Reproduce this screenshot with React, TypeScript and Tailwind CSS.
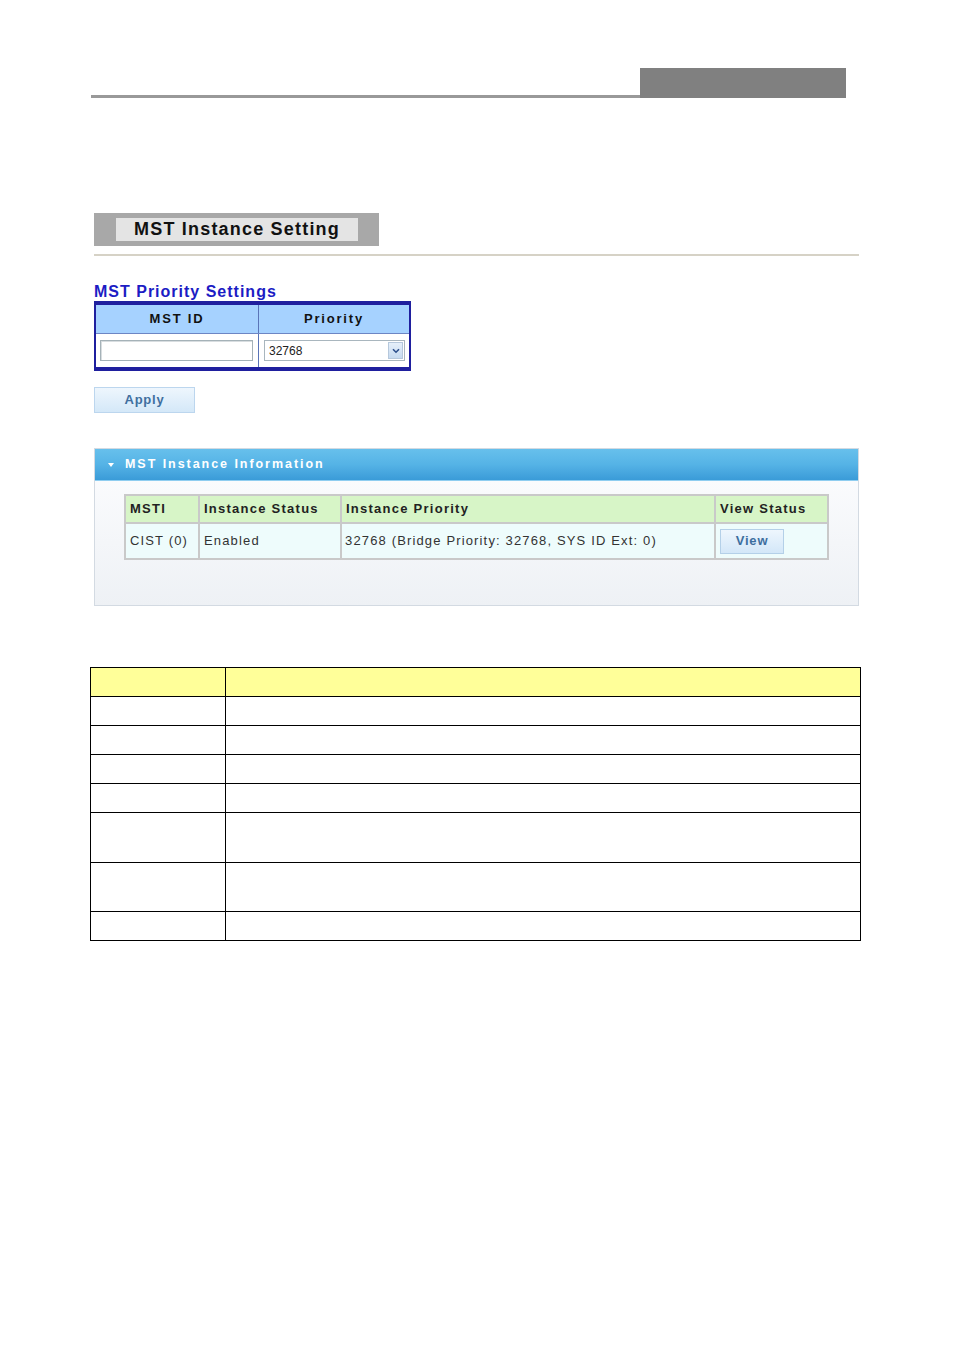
import React from "react";

const sans = { fontFamily: '"Liberation Sans", Arial, sans-serif' };

function PriorityTable() {
  return (
    <div className="w-[317px] border-x-2 border-t-4 border-b-4 border-[#1f1f9e] bg-white">
      <div className="grid grid-cols-[163px_1fr] bg-[#a6d2ff] border-b border-[#6d86c4]">
        <div className="h-[28px] flex items-center justify-center border-r border-[#5a74b8] text-[13px] font-bold tracking-[1.8px] text-[#111]">
          MST ID
        </div>
        <div className="h-[28px] flex items-center justify-center text-[13px] font-bold tracking-[1.8px] text-[#111]">
          Priority
        </div>
      </div>
      <div className="grid grid-cols-[163px_1fr]">
        <div className="h-[33px] flex items-center pl-[4px] border-r border-[#5a74b8]">
          <div className="w-[153px] h-[21px] border border-[#a5b2b8] bg-white shadow-[inset_1px_1px_0_#d8dde0]" />
        </div>
        <div className="h-[33px] flex items-center pl-[5px]">
          <div className="w-[141px] h-[21px] border border-[#a9b6be] bg-white flex items-center justify-between pl-[4px] pr-[1px]">
            <span className="text-[12px] text-[#222]">32768</span>
            <div className="w-[15px] h-[17px] bg-gradient-to-b from-[#e6f0fa] to-[#c6daf0] border border-[#b6c8dc] flex items-center justify-center">
              <svg width="8" height="6" viewBox="0 0 8 6">
                <path d="M1 1.2 L4 4.2 L7 1.2" stroke="#2c4f8c" strokeWidth="1.6" fill="none" />
              </svg>
            </div>
          </div>
        </div>
      </div>
    </div>
  );
}

function InfoPanel() {
  return (
    <div className="w-[765px] border border-[#d3dae2]">
      <div className="h-[32px] bg-gradient-to-b from-[#67c0ec] via-[#55b3e6] to-[#3a9bd8] border-b border-[#8fcdf0] flex items-center pl-[12px] text-white">
        <svg width="8" height="6" viewBox="0 0 8 6" className="mr-[10px] mt-[1px]">
          <path d="M1 1 L7 1 L4 5 Z" fill="#ffffff" />
        </svg>
        <span className="text-[12.5px] font-bold tracking-[1.95px]">MST Instance Information</span>
      </div>
      <div className="h-[124px] bg-gradient-to-b from-[#fafbfd] to-[#eef1f5] pl-[29px] pt-[13px]">
        <div className="w-[705px] border-2 border-[#c9c9c9]">
          <div className="grid grid-cols-[74px_142px_374px_1fr] bg-[#d7f5c7] text-[13px] font-bold tracking-[1.25px] text-[#222]">
            <div className="h-[26px] flex items-center pl-[4px] border-r-2 border-[#c9c9c9]">MSTI</div>
            <div className="h-[26px] flex items-center pl-[4px] border-r-2 border-[#c9c9c9]">Instance Status</div>
            <div className="h-[26px] flex items-center pl-[4px] border-r-2 border-[#c9c9c9]">Instance Priority</div>
            <div className="h-[26px] flex items-center pl-[4px]">View Status</div>
          </div>
          <div className="grid grid-cols-[74px_142px_374px_1fr] bg-[#eefcfc] text-[13px] tracking-[1.15px] text-[#333] border-t-2 border-[#c9c9c9]">
            <div className="h-[34px] flex items-center pl-[4px] border-r-2 border-[#c9c9c9]">CIST (0)</div>
            <div className="h-[34px] flex items-center pl-[4px] border-r-2 border-[#c9c9c9]">Enabled</div>
            <div className="h-[34px] flex items-center pl-[3px] border-r-2 border-[#c9c9c9]">32768 (Bridge Priority: 32768, SYS ID Ext: 0)</div>
            <div className="h-[34px] flex items-center pl-[4px]">
              <div className="w-[64px] h-[25px] border border-[#b4d0e8] bg-gradient-to-b from-[#eef6fd] to-[#d3e7f8] flex items-center justify-center text-[13px] font-bold tracking-[0.8px] text-[#3d6e9e]">
                View
              </div>
            </div>
          </div>
        </div>
      </div>
    </div>
  );
}

function BottomTable() {
  const rows = [29, 29, 29, 29, 50, 49, 29];
  return (
    <div className="w-[771px] border border-black">
      <div className="grid grid-cols-[135px_1fr] bg-[#ffff99]">
        <div className="h-[28px] border-r border-black" />
        <div className="h-[28px]" />
      </div>
      {rows.map((h, i) => (
        <div key={i} className="grid grid-cols-[135px_1fr] border-t border-black bg-white">
          <div className="border-r border-black" style={{ height: h - 1 }} />
          <div style={{ height: h - 1 }} />
        </div>
      ))}
    </div>
  );
}

export default function App() {
  return (
    <div className="w-[954px] h-[1350px] bg-white" style={sans}>
      <div className="pt-[68px] flex items-end">
        <div className="ml-[91px] w-[549px] h-[3px] bg-[#999999]" />
        <div className="w-[206px] h-[30px] bg-[#808080]" />
      </div>

      <div className="ml-[94px] mt-[115px]">
        <div className="w-[285px] h-[33px] bg-[#a8a8a8] pt-[5px] pl-[22px]">
          <div className="w-[242px] h-[23px] bg-[#e4e4e4] flex items-center justify-center text-[18px] font-bold tracking-[1.2px] text-[#111]">
            MST Instance Setting
          </div>
        </div>
        <div className="mt-[8px] w-[765px] h-[2px] bg-[#d6d2c6]" />

        <div className="mt-[26px] text-[16px] leading-[19px] font-bold tracking-[1px] text-[#1c1cc4]">
          MST Priority Settings
        </div>
        <div>
          <PriorityTable />
        </div>

        <div className="mt-[16px] w-[101px] h-[26px] border border-[#bcd6ee] bg-gradient-to-b from-[#eef6fd] to-[#d4e8f8] flex items-center justify-center text-[13px] font-bold tracking-[0.8px] text-[#406f9f]">
          Apply
        </div>

        <div className="mt-[35px]">
          <InfoPanel />
        </div>
      </div>

      <div className="ml-[90px] mt-[61px]">
        <BottomTable />
      </div>
    </div>
  );
}
